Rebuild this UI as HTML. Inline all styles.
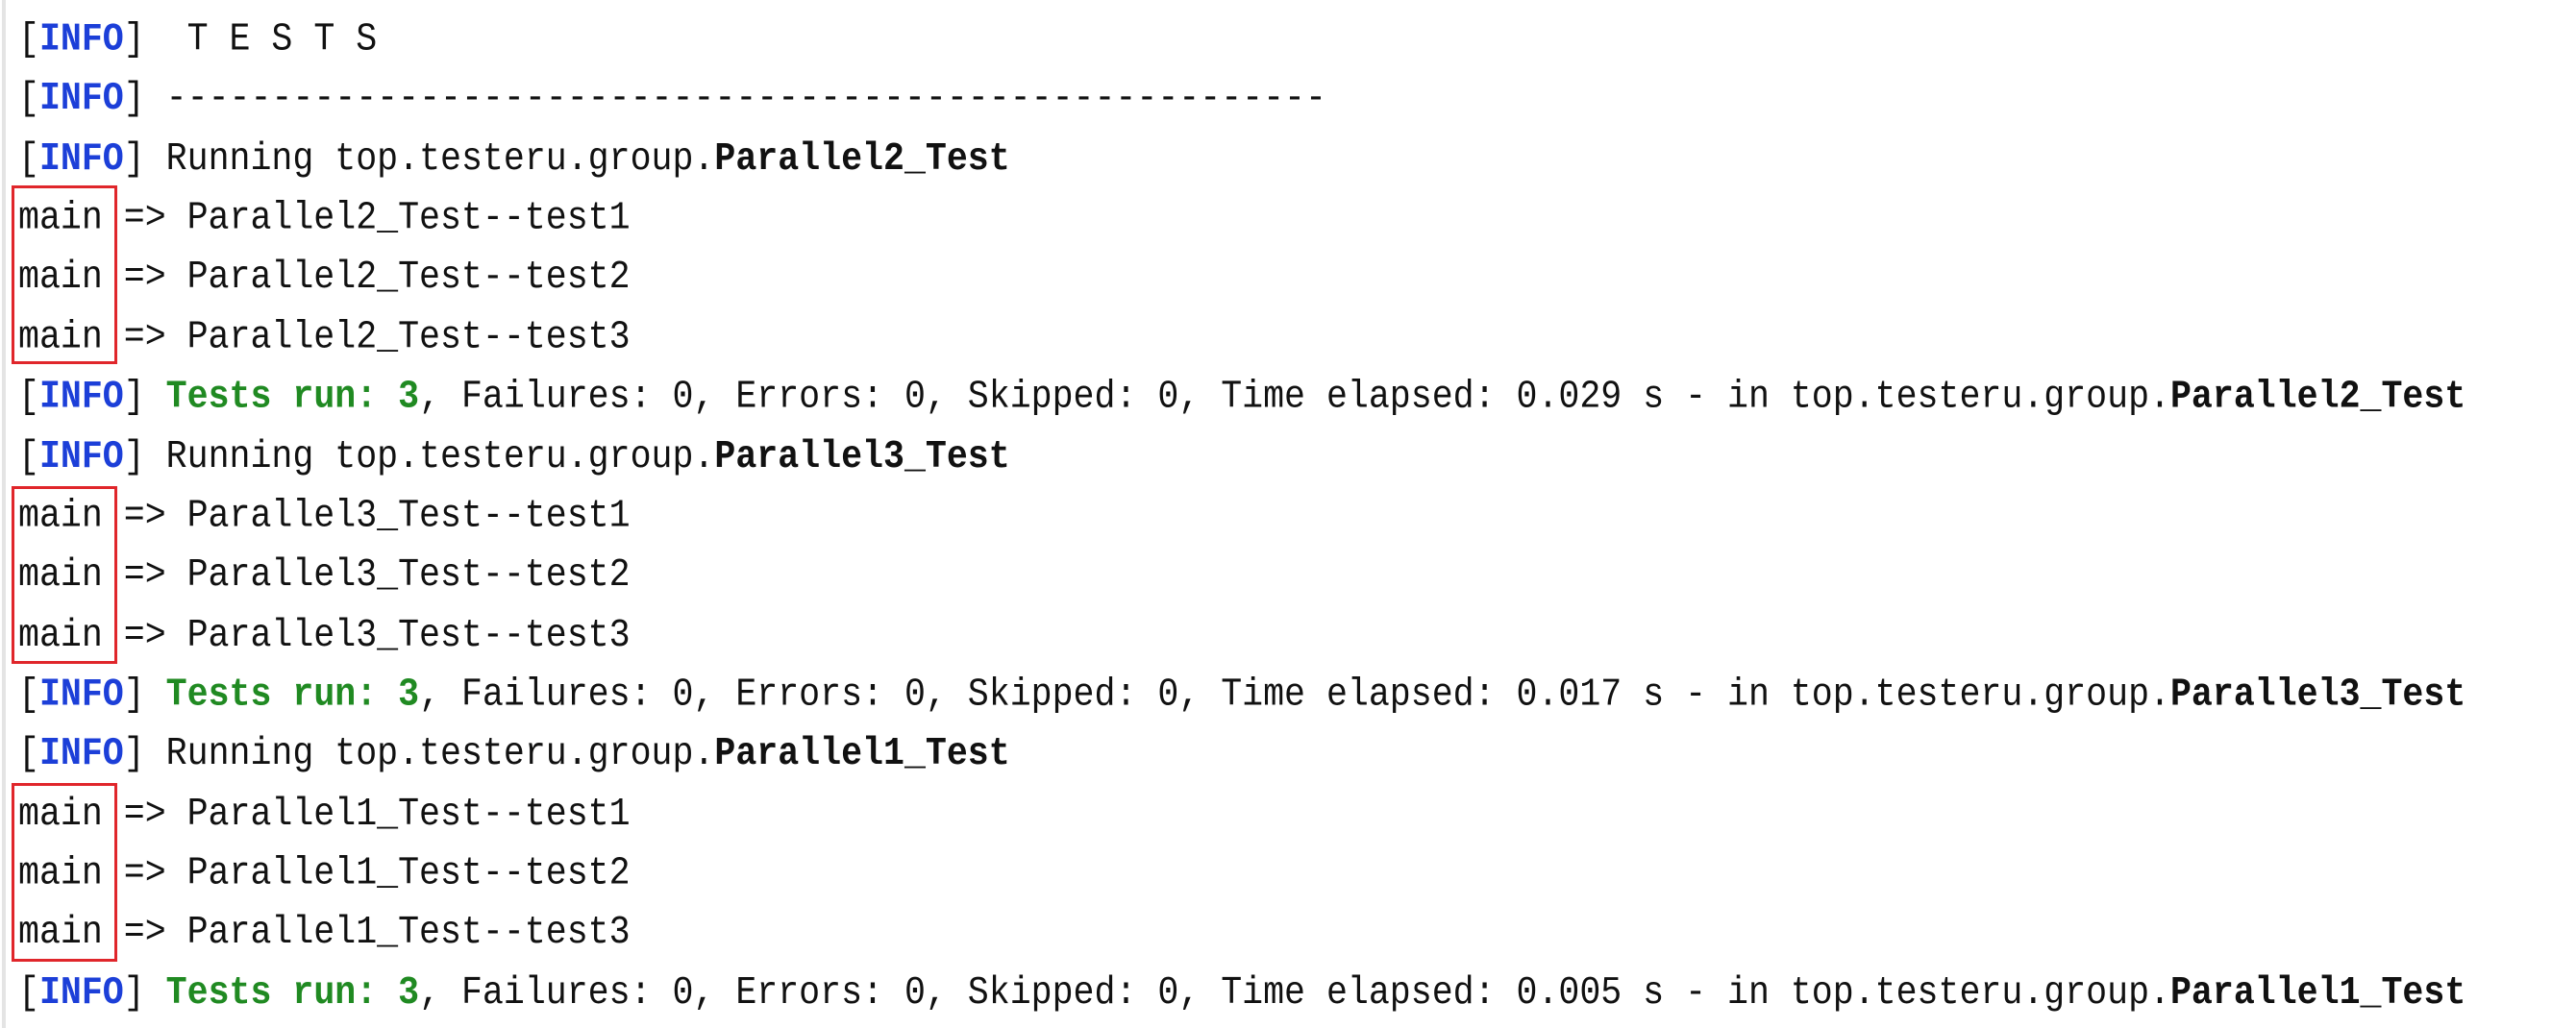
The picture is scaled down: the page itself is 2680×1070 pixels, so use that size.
<!DOCTYPE html>
<html><head><meta charset="utf-8"><style>
html,body{margin:0;padding:0;background:#fff;width:2680px;height:1070px;overflow:hidden}
body{position:relative}
.bar{position:absolute;left:2px;top:0;width:4px;height:1070px;background:#e4e4e4}
pre{position:absolute;left:19px;top:10px;margin:0;font-family:"Liberation Mono","DejaVu Sans Mono",monospace;font-size:36.6px;line-height:55.36px;color:#111;transform:scaleY(1.12);transform-origin:0 0}
.i{color:#1c3fd8;font-weight:bold}
.g{color:#208a22;font-weight:bold}
b{font-weight:bold}
.box{position:absolute;left:12px;width:104px;border:3px solid #e0262b}
</style></head><body>
<div class="bar"></div>
<pre>[<span class="i">INFO</span>]  T E S T S
[<span class="i">INFO</span>] -------------------------------------------------------
[<span class="i">INFO</span>] Running top.testeru.group.<b>Parallel2_Test</b>
main => Parallel2_Test--test1
main => Parallel2_Test--test2
main => Parallel2_Test--test3
[<span class="i">INFO</span>] <span class="g">Tests run: 3</span>, Failures: 0, Errors: 0, Skipped: 0, Time elapsed: 0.029 s - in top.testeru.group.<b>Parallel2_Test</b>
[<span class="i">INFO</span>] Running top.testeru.group.<b>Parallel3_Test</b>
main => Parallel3_Test--test1
main => Parallel3_Test--test2
main => Parallel3_Test--test3
[<span class="i">INFO</span>] <span class="g">Tests run: 3</span>, Failures: 0, Errors: 0, Skipped: 0, Time elapsed: 0.017 s - in top.testeru.group.<b>Parallel3_Test</b>
[<span class="i">INFO</span>] Running top.testeru.group.<b>Parallel1_Test</b>
main => Parallel1_Test--test1
main => Parallel1_Test--test2
main => Parallel1_Test--test3
[<span class="i">INFO</span>] <span class="g">Tests run: 3</span>, Failures: 0, Errors: 0, Skipped: 0, Time elapsed: 0.005 s - in top.testeru.group.<b>Parallel1_Test</b></pre>
<div class="box" style="top:193px;height:180px"></div>
<div class="box" style="top:506px;height:179px"></div>
<div class="box" style="top:815px;height:180px"></div>
</body></html>
